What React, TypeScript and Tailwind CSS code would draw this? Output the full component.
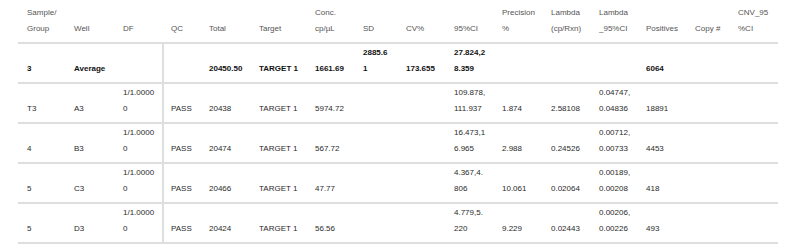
type Cell = string | [string, string];

const cols = 'grid grid-cols-[47px_49px_48px_38px_50px_56px_48px_43px_48px_48px_49px_48px_47px_49px_43px_49px]';

const header: Cell[] = [
  ['Sample/', 'Group'],
  'Well',
  'DF',
  'QC',
  'Total',
  'Target',
  ['Conc.', 'cp/µL'],
  'SD',
  'CV%',
  '95%CI',
  ['Precision', '%'],
  ['Lambda', '(cp/Rxn)'],
  ['Lambda', '_95%CI'],
  'Positives',
  'Copy #',
  ['CNV_95', '%CI'],
];

const rows: { bold?: boolean; cells: Cell[] }[] = [
  {
    bold: true,
    cells: ['3', 'Average', '', '', '20450.50', 'TARGET 1', '1661.69', ['2885.6', '1'], '173.655', ['27.824,2', '8.359'], '', '', '', '6064', '', ''],
  },
  {
    cells: ['T3', 'A3', ['1/1.0000', '0'], 'PASS', '20438', 'TARGET 1', '5974.72', '', '', ['109.878,', '111.937'], '1.874', '2.58108', ['0.04747,', '0.04836'], '18891', '', ''],
  },
  {
    cells: ['4', 'B3', ['1/1.0000', '0'], 'PASS', '20474', 'TARGET 1', '567.72', '', '', ['16.473,1', '6.965'], '2.988', '0.24526', ['0.00712,', '0.00733'], '4453', '', ''],
  },
  {
    cells: ['5', 'C3', ['1/1.0000', '0'], 'PASS', '20466', 'TARGET 1', '47.77', '', '', ['4.367,4.', '806'], '10.061', '0.02064', ['0.00189,', '0.00208'], '418', '', ''],
  },
  {
    cells: ['5', 'D3', ['1/1.0000', '0'], 'PASS', '20424', 'TARGET 1', '56.56', '', '', ['4.779,5.', '220'], '9.229', '0.02443', ['0.00206,', '0.00226'], '493', '', ''],
  },
];

function Lines({ value }: { value: Cell }) {
  const [a, b] = Array.isArray(value) ? value : ['', value];
  return (
    <>
      <div className="h-[16px] whitespace-nowrap">{a}</div>
      <div className="h-[16px] whitespace-nowrap">{b}</div>
    </>
  );
}

export default function App() {
  return (
    <div className="w-[798px] h-[249px] bg-white [font-family:'Liberation_Sans',Arial,sans-serif] text-[8px] leading-[16px]">
      <div className="ml-[18px] w-[760px]">
        {/* header */}
        <div className={`${cols} h-[44px] border-b-2 border-[#dedede] pt-[5px] text-[#555]`}>
          {header.map((h, i) => (
            <div key={i} className="pl-[9px]">
              <Lines value={h} />
            </div>
          ))}
        </div>

        {rows.map((r, ri) => (
          <div
            key={ri}
            className={`${cols} h-[40px] border-b-2 border-[#dedede] ${r.bold ? 'font-bold text-[#111]' : 'text-[#2a2a2a]'}`}
          >
            {r.cells.map((c, ci) => (
              <div
                key={ci}
                className={ci === 3 ? 'border-l-2 border-[#dedede] pl-[7px] pt-[1px]' : 'pl-[9px] pt-[1px]'}
              >
                <Lines value={c} />
              </div>
            ))}
          </div>
        ))}
      </div>
    </div>
  );
}
